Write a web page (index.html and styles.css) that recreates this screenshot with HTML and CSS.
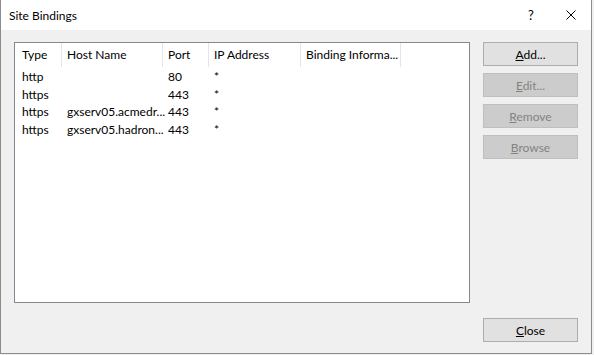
FILE: index.html
```html
<!DOCTYPE html>
<html lang="en">

<head>
    <meta charset="UTF-8">
    <title>Site Bindings</title>
    <link rel="stylesheet" href="styles.css">
</head>

<body>

    <div class="dialog">
        <div class="dialog-titlebar">
            <span class="dialog-title">Site Bindings</span>
            <div class="dialog-caption">
                <span class="caption-btn caption-help">?</span>
                <span class="caption-btn caption-close">
                    <svg width="10" height="10" viewBox="0 0 10 10">
                        <path d="M0.5 0.5 L9.5 9.5 M9.5 0.5 L0.5 9.5" stroke="#000" stroke-width="1" fill="none"/>
                    </svg>
                </span>
            </div>
        </div>

        <div class="dialog-body">
            <div class="dialog-main">
                <div class="bindings-list">
                    <div class="list-row list-header">
                        <div class="cell">Type</div>
                        <div class="cell">Host Name</div>
                        <div class="cell">Port</div>
                        <div class="cell">IP Address</div>
                        <div class="cell">Binding Informa...</div>
                    </div>
                    <div class="list-row">
                        <div class="cell">http</div>
                        <div class="cell"></div>
                        <div class="cell">80</div>
                        <div class="cell">*</div>
                        <div class="cell"></div>
                    </div>
                    <div class="list-row">
                        <div class="cell">https</div>
                        <div class="cell"></div>
                        <div class="cell">443</div>
                        <div class="cell">*</div>
                        <div class="cell"></div>
                    </div>
                    <div class="list-row">
                        <div class="cell">https</div>
                        <div class="cell">gxserv05.acmedr...</div>
                        <div class="cell">443</div>
                        <div class="cell">*</div>
                        <div class="cell"></div>
                    </div>
                    <div class="list-row">
                        <div class="cell">https</div>
                        <div class="cell">gxserv05.hadron...</div>
                        <div class="cell">443</div>
                        <div class="cell">*</div>
                        <div class="cell"></div>
                    </div>
                </div>

                <div class="dialog-actions">
                    <button class="win-btn"><u>A</u>dd...</button>
                    <button class="win-btn" disabled><u>E</u>dit...</button>
                    <button class="win-btn" disabled><u>R</u>emove</button>
                    <button class="win-btn" disabled><u>B</u>rowse</button>
                </div>
            </div>

            <div class="dialog-footer">
                <button class="win-btn"><u>C</u>lose</button>
            </div>
        </div>
    </div>

</body>

</html>
```

FILE: styles.css
```css
body {
    margin: 0;
    background: #f0f0f0;
    font-family: Lato, "Noto Sans", sans-serif;
    font-size: 12px;
    color: #000;
}

.dialog {
    width: 590px;
    height: 353px;
    border: 1px solid #8c8c8c;
    border-top: none;
    background: #f0f0f0;
    display: flex;
    flex-direction: column;
}

.dialog-titlebar {
    height: 30px;
    background: #fff;
    display: flex;
    align-items: center;
    justify-content: space-between;
}

.dialog-title {
    padding-left: 8px;
}

.dialog-caption {
    display: flex;
    height: 100%;
}

.caption-btn {
    width: 40px;
    display: flex;
    align-items: center;
    justify-content: center;
}

.caption-help {
    font-size: 13px;
}

.dialog-body {
    flex: 1;
    padding: 12px 13px 0 13px;
    display: flex;
    flex-direction: column;
}

.dialog-main {
    display: flex;
    gap: 13px;
}

.bindings-list {
    width: 454px;
    height: 259px;
    background: #fff;
    border: 1px solid #828790;
}

.list-row {
    display: grid;
    grid-template-columns: 47px 101px 46px 92px 100px;
    height: 17.5px;
    line-height: 17.5px;
    white-space: nowrap;
}

.list-row .cell {
    padding-left: 5px;
}

.list-row .cell:first-child {
    padding-left: 7px;
}

.list-header {
    height: 24px;
    line-height: 24px;
    margin-bottom: 1px;
}

.list-header .cell {
    border-right: 1px solid #e5e5e5;
}

.dialog-actions {
    display: flex;
    flex-direction: column;
    gap: 7px;
}

.win-btn {
    width: 95px;
    height: 24px;
    padding: 0;
    font-family: inherit;
    font-size: 12px;
    color: #000;
    background: #e1e1e1;
    border: 1px solid #adadad;
    border-radius: 0;
}

.win-btn:disabled {
    color: #838383;
    background: #cccccc;
    border-color: #bfbfbf;
}

.dialog-footer {
    display: flex;
    justify-content: flex-end;
    margin-top: 15px;
}
```
